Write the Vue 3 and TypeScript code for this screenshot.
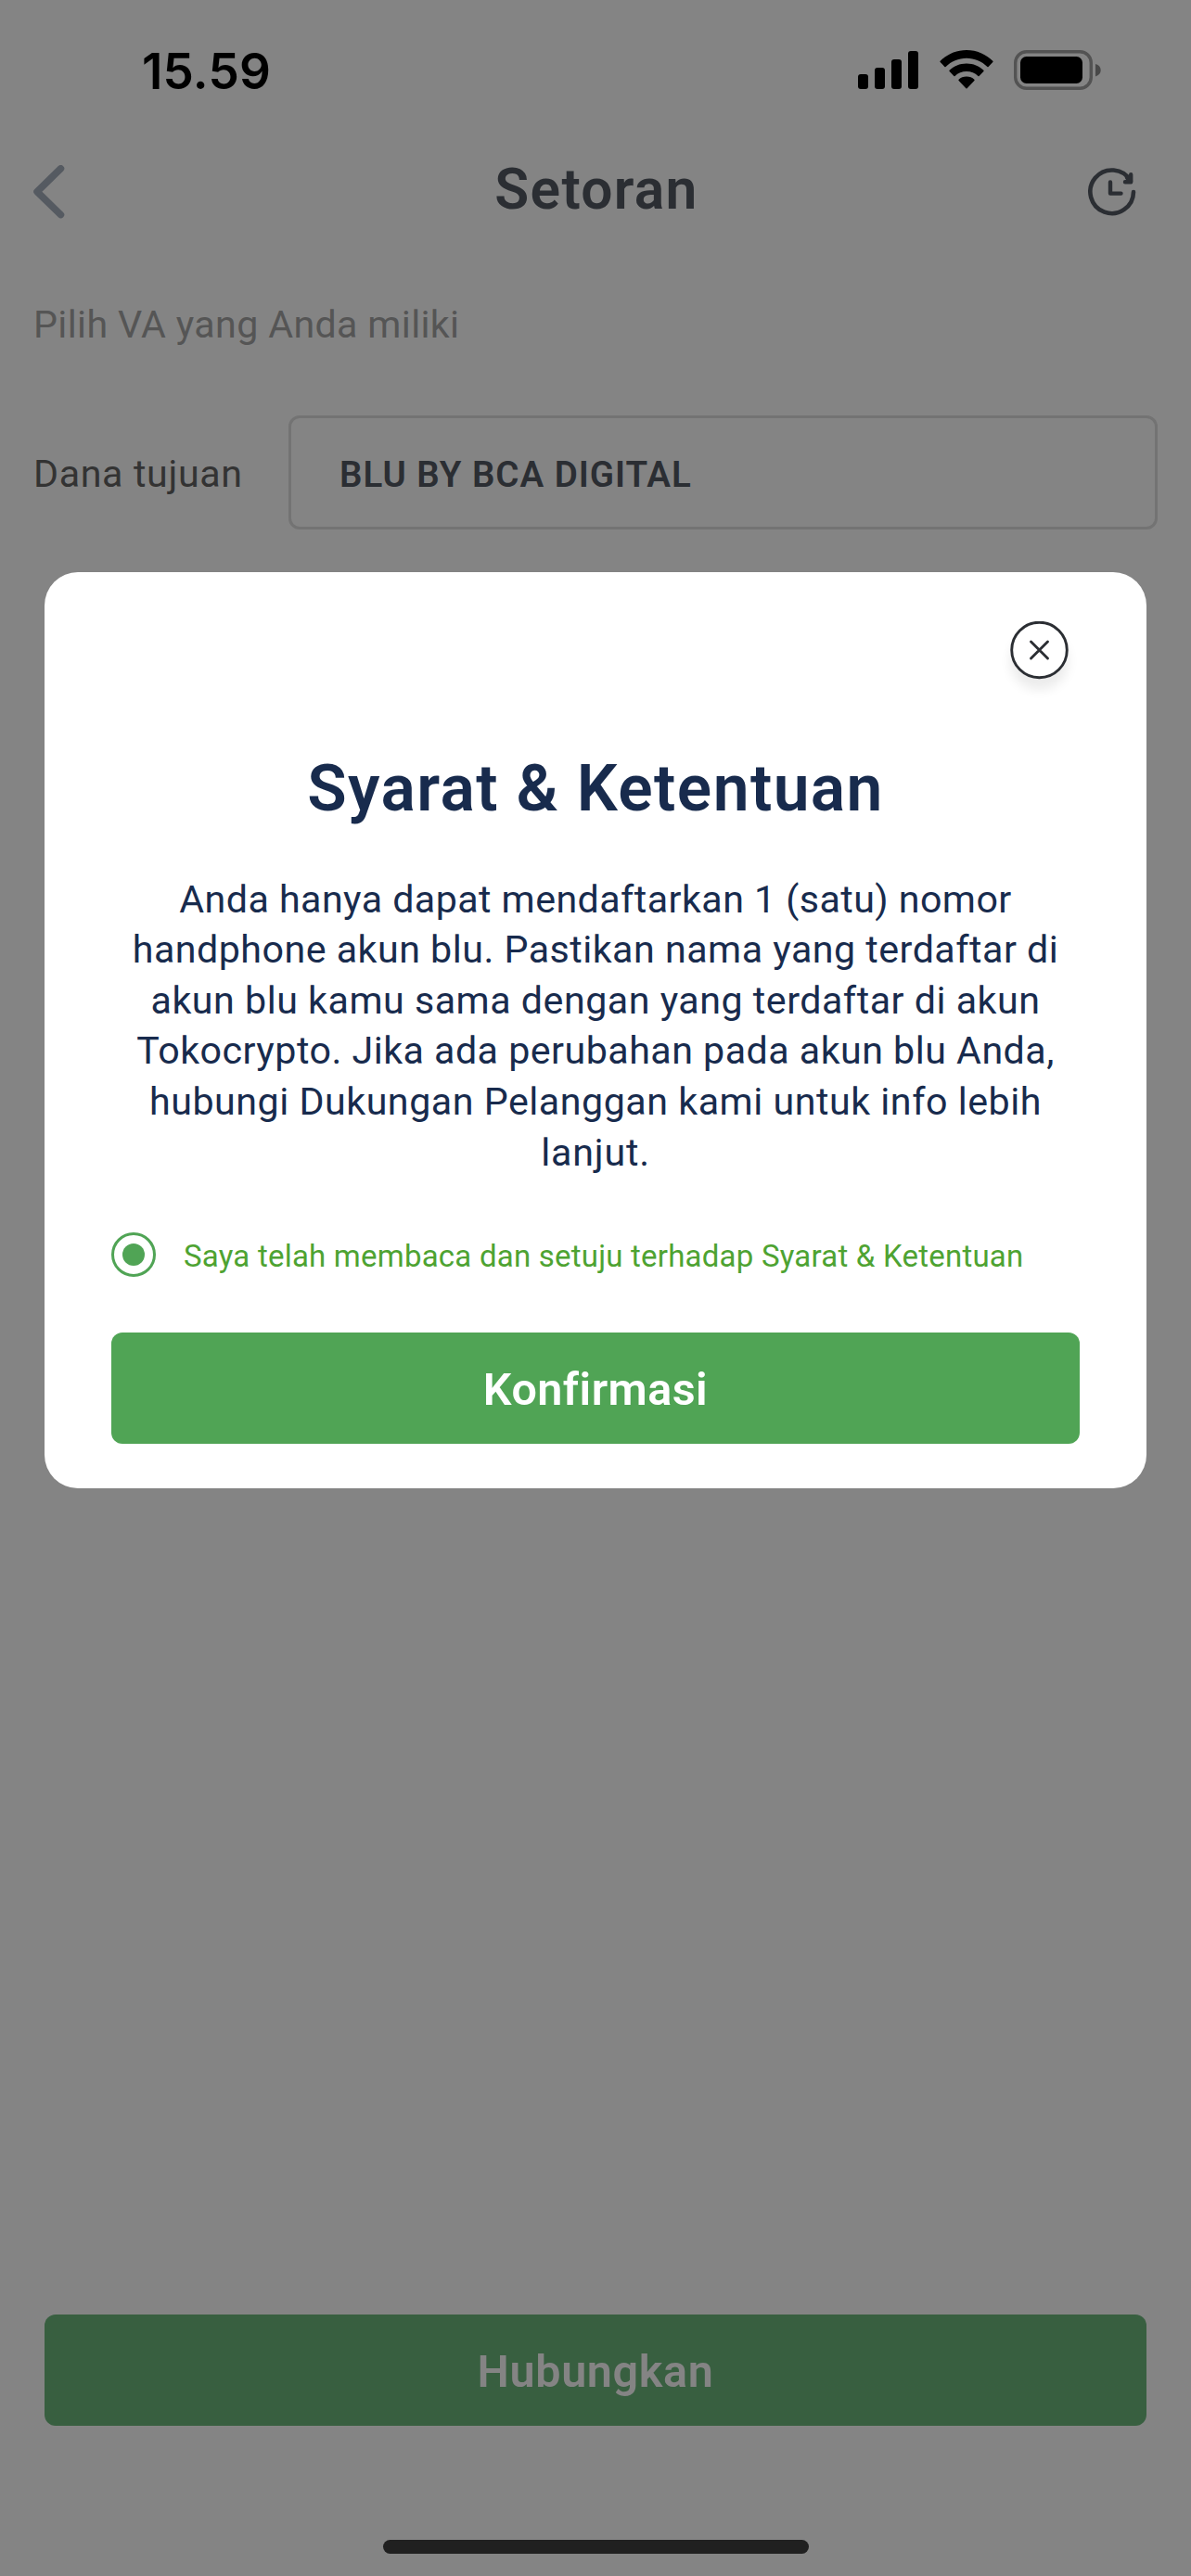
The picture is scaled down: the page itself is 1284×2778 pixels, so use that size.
<script setup lang="ts">
import { ref } from 'vue'

interface Line {
  text: string
  spacing: number
}

const agreed = ref(true)

const terms: Line[] = [
  { text: 'Anda hanya dapat mendaftarkan 1 (satu) nomor', spacing: 0.433 },
  { text: 'handphone akun blu. Pastikan nama yang terdaftar di', spacing: 0.482 },
  { text: 'akun blu kamu sama dengan yang terdaftar di akun', spacing: 0.5 },
  { text: 'Tokocrypto. Jika ada perubahan pada akun blu Anda,', spacing: 0.47 },
  { text: 'hubungi Dukungan Pelanggan kami untuk info lebih', spacing: 0.52 },
  { text: 'lanjut.', spacing: 0.8 },
]
</script>

<template>
  <div class="screen">
    <div class="status">
      <span class="time">15.59</span>
      <div class="indicators">
        <svg class="signal" width="65" height="41" viewBox="0 0 65 41">
          <rect x="0" y="25" width="11" height="16" rx="3" />
          <rect x="18" y="18" width="11" height="23" rx="3" />
          <rect x="36" y="9" width="11" height="32" rx="3" />
          <rect x="54" y="0" width="11" height="41" rx="3" />
        </svg>
        <svg class="wifi" width="58" height="42" viewBox="0 0 58 42">
          <path d="M29 0C40 0 50.200 4.600 57.300 11.800Q57.900 12.500 57.300 13.100L52.600 17.900Q52 18.400 51.400 17.900C45.500 12.200 37.700 8.700 29 8.700S12.500 12.200 6.600 17.900Q6 18.400 5.400 17.900L.7 13.100Q.1 12.500.7 11.800C7.800 4.600 18 0 29 0Z" />
          <path d="M29 14.500C36.200 14.500 42.700 17.300 47.400 21.800Q48 22.400 47.400 23L42.600 27.900Q42 28.400 41.400 27.900C38.200 24.900 33.800 23 29 23S19.800 24.900 16.600 27.900Q16 28.400 15.400 27.900L10.600 23Q10 22.400 10.600 21.800C15.300 17.300 21.800 14.500 29 14.500Z" />
          <path d="M29 28.600C32.300 28.600 35.200 29.800 37.400 31.800Q38 32.500 37.400 33.100L29.600 41.300Q29 41.800 28.400 41.300L20.600 33.100Q20 32.500 20.600 31.800C22.800 29.800 25.700 28.600 29 28.600Z" />
        </svg>
        <svg class="battery" width="95" height="43" viewBox="0 0 95 43">
          <rect x="1.700" y="1.700" width="81.600" height="39.600" rx="12" fill="none" stroke="#535353" stroke-width="3.400" />
          <rect x="7" y="7" width="67" height="29" rx="6.500" />
          <path d="M88 15Q93.700 16.800 93.700 21.700T88 28.400Z" fill="#484848" />
        </svg>
      </div>
    </div>

    <header class="header">
      <svg class="back" width="34" height="58" viewBox="0 0 34 58">
        <path d="M29.500 3.800L4 28.700L29.500 53.600" fill="none" stroke="#555a61" stroke-width="7.500" stroke-linecap="round" stroke-linejoin="round" />
      </svg>
      <h1>Setoran</h1>
      <svg class="history" width="52" height="52" viewBox="0 0 52 52">
        <g fill="none" stroke="#2b2e33" stroke-linecap="round" stroke-linejoin="round">
          <path d="M49 26A23.300 23.300 0 1 1 45.800 14" stroke-width="4.600" />
          <path d="M46.200 7.200V15.200H40M46 15.200L42 10.500" stroke-width="4.400" />
          <path d="M24 15.500V27.600H35.500" stroke-width="4.400" />
        </g>
      </svg>
    </header>

    <main class="content">
      <p class="hint">Pilih VA yang Anda miliki</p>
      <div class="row">
        <span class="label">Dana tujuan</span>
        <div class="field">BLU BY BCA DIGITAL</div>
      </div>
    </main>

    <button class="connect">Hubungkan</button>
    <div class="home"></div>

    <section class="modal">
      <button class="close" aria-label="Tutup">
        <svg width="63" height="63" viewBox="0 0 63 63">
          <circle cx="31.500" cy="31" r="29.800" fill="#fff" stroke="#2b2e33" stroke-width="2.900" />
          <path d="M22.500 22L40.500 40M40.500 22L22.500 40" stroke="#2b2e33" stroke-width="2.900" stroke-linecap="round" />
        </svg>
      </button>
      <h2>Syarat &amp; Ketentuan</h2>
      <p class="terms">
        <span v-for="line in terms" :key="line.text" :style="{ letterSpacing: line.spacing + 'px' }">{{ line.text }}</span>
      </p>
      <div class="agree" @click="agreed = !agreed">
        <span class="radio"><span v-if="agreed" class="dot"></span></span>
        <span class="agree-text">Saya telah membaca dan setuju terhadap Syarat &amp; Ketentuan</span>
      </div>
      <button class="confirm">Konfirmasi</button>
    </section>
  </div>
</template>

<style scoped>
.screen {
  position: relative;
  display: flex;
  flex-direction: column;
  width: 1284px;
  height: 2778px;
  box-sizing: border-box;
  overflow: hidden;
  background: #848484;
  font-family: "Roboto", "Liberation Sans", sans-serif;
}
h1, h2, p { margin: 0; }
svg { display: block; flex: none; }
button {
  border: 0;
  padding: 0;
  font-family: inherit;
  cursor: pointer;
}
.status {
  display: flex;
  justify-content: space-between;
  align-items: flex-start;
  height: 150px;
  box-sizing: border-box;
  padding: 47px 96px 0 153px;
}
.time {
  font: 600 53px/60px "Inter", sans-serif;
  letter-spacing: 0.2px;
  color: #000;
}
.indicators {
  display: flex;
  align-items: flex-start;
  padding-top: 7px;
}
.signal { margin-top: 1px; }
.wifi { margin-left: 22.500px; }
.battery { margin-left: 22.500px; }
.header {
  display: flex;
  align-items: flex-start;
  justify-content: space-between;
  height: 173px;
  box-sizing: border-box;
  padding: 19px 59px 0 36px;
}
.back { margin-top: 9px; margin-right: 16px; }
.history { margin-top: 12px; }
h1 {
  font-size: 60.500px;
  line-height: 72px;
  font-weight: 600;
  letter-spacing: 1.280px;
  color: #2b2e33;
  padding-left: 27px;
}
.content { padding: 0 36px; }
.hint {
  font-size: 41.200px;
  line-height: 54px;
  letter-spacing: 0.340px;
  color: #555;
}
.row {
  display: flex;
  align-items: stretch;
  height: 123px;
  margin-top: 71px;
}
.label {
  width: 275px;
  flex: none;
  box-sizing: border-box;
  padding-top: 3px;
  font-size: 41.200px;
  line-height: 120px;
  letter-spacing: 0.640px;
  color: #333;
}
.field {
  flex: 1;
  box-sizing: border-box;
  padding: 2px 0 0 52px;
  border: 3px solid #737373;
  border-radius: 12px;
  font-size: 38.500px;
  line-height: 118px;
  font-weight: 600;
  letter-spacing: 0.983px;
  color: #2b2e33;
}
.connect {
  margin: auto 48px 0;
  height: 120px;
  padding-top: 3px;
  border-radius: 12px;
  background: #385f40;
  color: #848484;
  font-size: 48.500px;
  font-weight: 600;
  letter-spacing: 0.620px;
}
.home {
  width: 459px;
  height: 15px;
  margin: 123px auto 24px;
  border-radius: 8px;
  background: #202020;
}
.modal {
  position: absolute;
  top: 617px;
  left: 48px;
  width: 1188px;
  height: 988px;
  box-sizing: border-box;
  display: flex;
  flex-direction: column;
  padding: 53px 72px 48px;
  border-radius: 36px;
  background: #fff;
  color: #182b4d;
}
.close {
  align-self: flex-end;
  width: 63px;
  height: 62px;
  margin-right: 12px;
  border-radius: 50%;
  background: #fff;
  box-shadow: 0 12px 12px rgba(0, 0, 0, 0.08);
}
h2 {
  margin-top: 74px;
  font-size: 69.500px;
  line-height: 90px;
  font-weight: 600;
  letter-spacing: 1.400px;
  text-align: center;
}
.terms {
  display: flex;
  flex-direction: column;
  align-items: center;
  margin-top: 46.600px;
  font-size: 41.200px;
  line-height: 54.600px;
  white-space: nowrap;
}
.agree {
  display: flex;
  align-items: center;
  height: 48px;
  margin-top: auto;
}
.radio {
  display: flex;
  align-items: center;
  justify-content: center;
  width: 48px;
  height: 48px;
  box-sizing: border-box;
  border: 3px solid #50a455;
  border-radius: 50%;
}
.dot {
  width: 24px;
  height: 24px;
  border-radius: 50%;
  background: #50a455;
}
.agree-text {
  margin-left: 30px;
  padding-top: 3px;
  font-size: 33px;
  line-height: 48px;
  letter-spacing: 0.220px;
  white-space: nowrap;
  color: #4ea332;
}
.confirm {
  height: 120px;
  margin-top: 60px;
  padding-top: 3px;
  border-radius: 12px;
  background: #50a455;
  color: #fff;
  font-size: 48.500px;
  font-weight: 600;
  letter-spacing: 0.470px;
}
</style>
